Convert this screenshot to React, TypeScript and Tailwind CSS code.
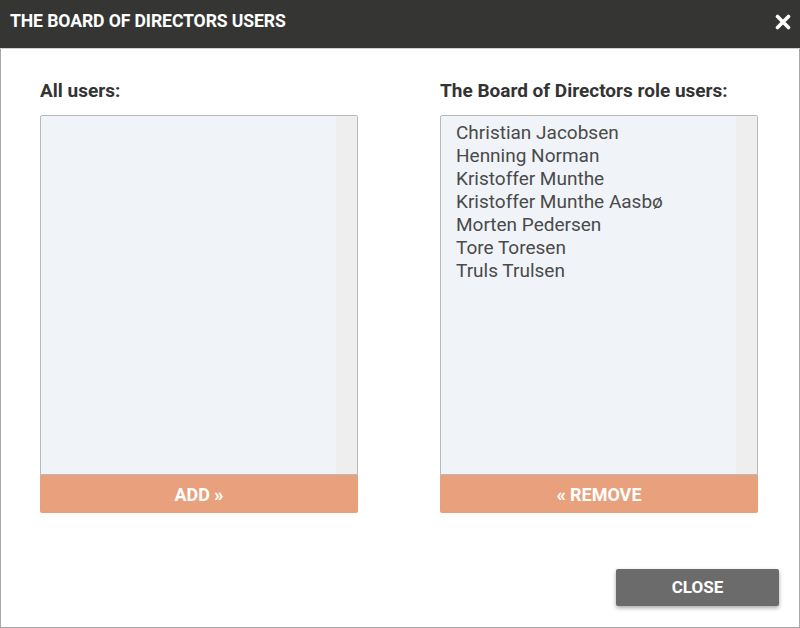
const users = [
  "Christian Jacobsen",
  "Henning Norman",
  "Kristoffer Munthe",
  "Kristoffer Munthe Aasbø",
  "Morten Pedersen",
  "Tore Toresen",
  "Truls Trulsen",
];

function UserList({ label, items, button }: { label: string; items: string[]; button: React.ReactNode }) {
  return (
    <div className="flex w-[318px] flex-col">
      <div className="h-[22px] text-[19px] font-bold leading-[22px] text-[#333333]">{label}</div>
      <div className="mt-[13px] flex h-[360px] rounded-t-[2px] border border-[#b9b9b9] bg-[#f0f4f8]">
        <ul className="flex-1 pl-[15px] pt-[5px] text-[19px] leading-[23px] text-[#4a4a4a]">
          {items.map((u) => (
            <li key={u}>{u}</li>
          ))}
        </ul>
        <div className="w-[21px] bg-[#eeeeee]" />
      </div>
      <button className="flex h-[38px] items-center justify-center gap-[4px] rounded-b-[2px] bg-[#e9a07c] text-[18px] font-bold text-white">
        {button}
      </button>
    </div>
  );
}

export default function App() {
  return (
    <div
      className="flex h-[628px] w-[800px] flex-col border-x border-b border-[#a8a8a8] bg-white"
      style={{ fontFamily: "Roboto, 'Liberation Sans', sans-serif" }}
    >
      <div className="-mx-px flex h-[49px] shrink-0 items-center justify-between border-b border-[#cfcfcf] bg-[#353633] pb-[5px] pl-[10px] pr-[8px]">
        <span className="text-[17.6px] font-bold tracking-[-0.1px] text-white">THE BOARD OF DIRECTORS USERS</span>
        <svg width="16" height="16" viewBox="0 0 16 16" className="mr-[1px]">
          <path d="M2.5 2.5 L13.5 13.5 M13.5 2.5 L2.5 13.5" stroke="white" strokeWidth="3.6" strokeLinecap="round" />
        </svg>
      </div>
      <div className="flex gap-[82px] px-[39px] pt-[31px]">
        <UserList
          label="All users:"
          items={[]}
          button={
            <>
              <span>ADD</span>
              <span className="text-[19px] leading-none">»</span>
            </>
          }
        />
        <UserList
          label="The Board of Directors role users:"
          items={users}
          button={
            <>
              <span className="text-[19px] leading-none">«</span>
              <span>REMOVE</span>
            </>
          }
        />
      </div>
      <div className="flex flex-1 items-end justify-end pb-[21px] pr-[20px]">
        <button className="h-[37px] w-[163px] rounded-[2px] bg-[#6b6b6b] text-[17px] font-bold text-white shadow-[0_2px_4px_rgba(0,0,0,0.35)]">
          CLOSE
        </button>
      </div>
    </div>
  );
}
